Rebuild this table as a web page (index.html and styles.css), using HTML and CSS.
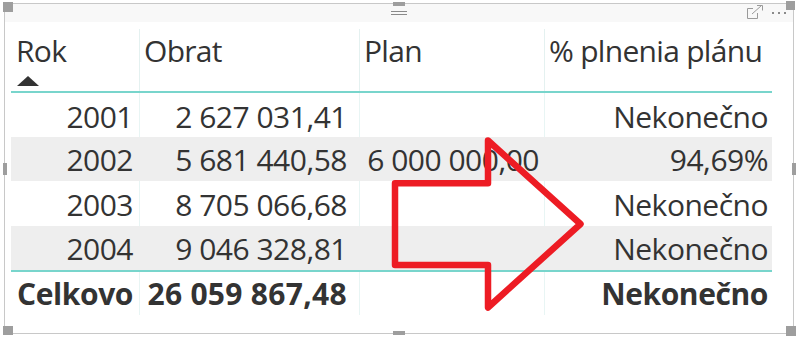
FILE: index.html
```html
<!DOCTYPE html>
<html lang="sk">
<head>
<meta charset="utf-8">
<title>Tabuľka</title>
<link rel="stylesheet" href="styles.css">
</head>
<body>
<div class="visual">
  <div class="topbar">
    <span></span>
    <svg class="grip" width="16" height="18" viewBox="0 0 16 18"><path d="M0 7.5H16M0 10.5H16" stroke="#8a8a8a" stroke-width="1"/></svg>
    <div class="actions">
      <svg class="focus" width="16" height="14" viewBox="0 0 16 14" fill="none" stroke="#9a9a9a" stroke-width="1"><path d="M0.5 3.5V13.5H10.5V8"/><path d="M0.5 3.5H6"/><path d="M5 9L14.5 0.5"/><path d="M10 0.5H15.5V5.5"/></svg>
      <svg class="more" width="14" height="4" viewBox="0 0 14 4" fill="#8a8a8a"><rect x="0" y="1" width="2" height="2"/><rect x="6" y="1" width="2" height="2"/><rect x="12" y="1" width="2" height="2"/></svg>
    </div>
  </div>
  <div class="table">
    <div class="row head">
      <div class="cell c1"><span>Rok</span><span class="sort"></span></div>
      <div class="cell c2"><span>Obrat</span></div>
      <div class="cell c3"><span>Plan</span></div>
      <div class="cell c4"><span>% plnenia plánu</span></div>
    </div>
    <div class="row first">
      <div class="cell c1">2001</div>
      <div class="cell c2">2 627 031,41</div>
      <div class="cell c3"></div>
      <div class="cell c4">Nekonečno</div>
    </div>
    <div class="row alt">
      <div class="cell c1">2002</div>
      <div class="cell c2">5 681 440,58</div>
      <div class="cell c3">6 000 000,00</div>
      <div class="cell c4">94,69%</div>
    </div>
    <div class="row">
      <div class="cell c1">2003</div>
      <div class="cell c2">8 705 066,68</div>
      <div class="cell c3"></div>
      <div class="cell c4">Nekonečno</div>
    </div>
    <div class="row alt">
      <div class="cell c1">2004</div>
      <div class="cell c2">9 046 328,81</div>
      <div class="cell c3"></div>
      <div class="cell c4">Nekonečno</div>
    </div>
    <div class="row total">
      <div class="cell c1">Celkovo</div>
      <div class="cell c2">26 059 867,48</div>
      <div class="cell c3"></div>
      <div class="cell c4">Nekonečno</div>
    </div>
  </div>
</div>
<span class="handle h-tl"></span>
<span class="handle h-tm"></span>
<span class="handle h-tr"></span>
<span class="handle h-ml"></span>
<span class="handle h-mr"></span>
<span class="handle h-bl"></span>
<span class="handle h-bm"></span>
<span class="handle h-br"></span>
<svg class="annot" width="798" height="337" viewBox="0 0 798 337"><polygon points="395,183.3 488,183.3 488,140.5 580.5,224 488,307.5 488,265 395,265" fill="none" stroke="#ed1c24" stroke-width="6.5" stroke-linejoin="round"/></svg>
</body>
</html>
```
FILE: styles.css
```css
html, body {
  margin: 0;
  padding: 0;
  background: #ffffff;
}
body {
  position: relative;
  width: 798px;
  height: 337px;
  overflow: hidden;
  font-family: "Open Sans", "Noto Sans", sans-serif;
  color: #333333;
}
.visual {
  box-sizing: border-box;
  width: 790px;
  height: 331px;
  margin: 3px 0 0 4px;
  border: 1px solid #c8c8c8;
  background: #ffffff;
}
.topbar {
  height: 18px;
  background: #f8f8f8;
  display: grid;
  grid-template-columns: 1fr auto 1fr;
  align-items: start;
}
.grip {
  display: block;
}
.actions {
  justify-self: end;
  display: flex;
  align-items: flex-start;
  gap: 9px;
  padding-right: 7px;
}
.focus {
  display: block;
  margin-top: 1px;
}
.more {
  display: block;
  margin-top: 7px;
}
.table {
  margin: 7px 0 0 6px;
  width: 761px;
}
.row {
  display: grid;
  grid-template-columns: 128px 220px 185px 228px;
  height: 44.5px;
}
.row.first {
  height: 43.5px;
}
.row.alt {
  background: #eeeeee;
}
.cell {
  box-sizing: border-box;
  font-size: 30px;
  letter-spacing: -0.5px;
  line-height: 42px;
  padding-top: 2.5px;
  text-align: right;
  white-space: nowrap;
  border-left: 1px solid #e8f5f4;
}
.row.alt .cell {
  border-left-color: #eeeeee;
}
.cell.c1 {
  border-left-color: transparent !important;
  padding-right: 6px;
}
.cell.c2 { padding-right: 12px; }
.cell.c3 { padding-right: 5px; }
.cell.c4 { padding-right: 4px; }
.row.head {
  border-bottom: 2px solid #78d5cc;
  height: 64px;
  box-sizing: border-box;
}
.row.head .cell {
  text-align: left;
  padding: 4px 0 0 4px;
  line-height: 36px;
  letter-spacing: -0.7px;
  border-left-color: #e4f1f0;
}
.sort {
  display: block;
  width: 0;
  height: 0;
  margin: 7px 0 0 1px;
  border-left: 11px solid transparent;
  border-right: 11px solid transparent;
  border-bottom: 10px solid #333333;
}
.row.total {
  border-top: 2px solid #78d5cc;
  height: 45px;
  box-sizing: border-box;
}
.row.total .cell {
  font-weight: 700;
  letter-spacing: -0.4px;
  padding-top: 1px;
}
.row.total .cell.c2 {
  letter-spacing: 0.3px;
}
.handle {
  position: absolute;
  background: #9e9e9e;
}
.h-tl { left: 3px; top: 2px; width: 10px; height: 10px; }
.h-tr { left: 786px; top: 1px; width: 9px; height: 9px; }
.h-bl { left: 3px; top: 326px; width: 10px; height: 9px; }
.h-br { left: 786px; top: 326px; width: 10px; height: 10px; }
.h-tm { left: 393px; top: 2px; width: 12px; height: 4px; }
.h-bm { left: 393px; top: 331px; width: 12px; height: 4px; }
.h-ml { left: 3px; top: 163px; width: 4px; height: 12px; }
.h-mr { left: 792px; top: 163px; width: 4px; height: 12px; }
.annot {
  position: absolute;
  left: 0;
  top: 0;
  pointer-events: none;
}
```
